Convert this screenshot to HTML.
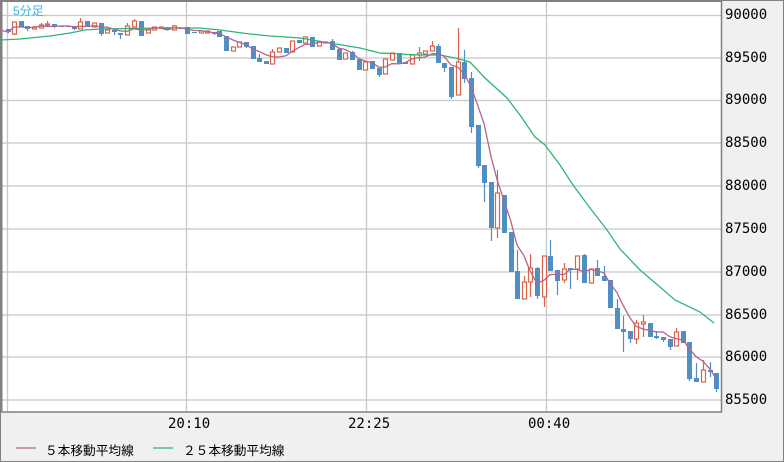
<!DOCTYPE html>
<html><head><meta charset="utf-8"><style>
html,body{margin:0;padding:0;}
body{width:784px;height:462px;background:#f0f0f0;position:relative;overflow:hidden;font-family:"Liberation Sans","Noto Sans CJK JP",sans-serif;}
#frame{position:absolute;left:0;top:0;width:782px;height:460px;border:1px solid #808080;}
svg{position:absolute;left:0;top:0;}
.lbl{position:absolute;font-family:"DejaVu Sans Mono","Liberation Mono",monospace;font-size:14px;color:#000;}
.leg{position:absolute;top:440px;font-size:12.7px;color:#000;font-family:"Liberation Sans","Noto Sans CJK JP",sans-serif;letter-spacing:0;}
</style></head><body>
<div id="frame"></div>
<svg id="s" width="784" height="462" xmlns="http://www.w3.org/2000/svg">
<rect x="1" y="1" width="720" height="411" fill="#fff"/>
<g stroke="#c8c8c8" stroke-width="1.3">
<line x1="1" y1="15.5" x2="721" y2="15.5"/><line x1="1" y1="58" x2="721" y2="58"/>
<line x1="1" y1="100.5" x2="721" y2="100.5"/><line x1="1" y1="143" x2="721" y2="143"/>
<line x1="1" y1="186" x2="721" y2="186"/><line x1="1" y1="229" x2="721" y2="229"/>
<line x1="1" y1="272" x2="721" y2="272"/><line x1="1" y1="315" x2="721" y2="315"/>
<line x1="1" y1="357" x2="721" y2="357"/><line x1="1" y1="400" x2="721" y2="400"/>
<line x1="7.5" y1="1" x2="7.5" y2="412"/><line x1="186.5" y1="1" x2="186.5" y2="412"/>
<line x1="366.5" y1="1" x2="366.5" y2="412"/><line x1="546.5" y1="1" x2="546.5" y2="412"/>
</g>
<line x1="1" y1="412" x2="722" y2="412" stroke="#808080" stroke-width="1.5"/>
<line x1="721.5" y1="1" x2="721.5" y2="412" stroke="#808080" stroke-width="1.5"/>
<line x1="1.5" y1="1" x2="1.5" y2="412" stroke="#808080" stroke-width="2"/>
<line x1="0" y1="1" x2="722" y2="1" stroke="#808080" stroke-width="2"/>
<g id="c"></g>
<polyline fill="none" stroke="#2fb573" stroke-width="1.3" points="0,40 20,39 50,36 70,33 85,30 100,29 160,28 200,28 220,30 250,34 270,36 300,38 330,43 360,48 380,53 400,54 420,55 440,55 455,58 470,62 485,78 507,98 520,115 535,137 545,145 560,165 573,185 590,208 607,230 620,249 640,270 660,287 675,300 700,312 714,323"/>
<polyline id="ma5" fill="none" stroke="#b5648c" stroke-width="1.3"/>
<line x1="16" y1="448" x2="36" y2="448" stroke="#b5648c" stroke-width="1.3"/>
<line x1="153" y1="448" x2="173" y2="448" stroke="#2fb573" stroke-width="1.3"/>
<text x="13" y="15" font-size="12" fill="#3ab4e8" font-family="Liberation Sans, Noto Sans CJK JP, sans-serif">5分足</text>
</svg>
<div class="lbl" style="left:725px;top:7px">90000</div>
<div class="lbl" style="left:725px;top:50px">89500</div>
<div class="lbl" style="left:725px;top:92px">89000</div>
<div class="lbl" style="left:725px;top:135px">88500</div>
<div class="lbl" style="left:725px;top:178px">88000</div>
<div class="lbl" style="left:725px;top:221px">87500</div>
<div class="lbl" style="left:725px;top:264px">87000</div>
<div class="lbl" style="left:725px;top:307px">86500</div>
<div class="lbl" style="left:725px;top:349px">86000</div>
<div class="lbl" style="left:725px;top:392px">85500</div>
<div class="lbl" style="left:168px;top:416px">20:10</div>
<div class="lbl" style="left:348px;top:416px">22:25</div>
<div class="lbl" style="left:528px;top:416px">00:40</div>
<div class="leg" style="left:45px">５本移動平均線</div>
<div class="leg" style="left:183px">２５本移動平均線</div>
<script>
var d=[
[8,'b',29,32,29,33],[14,'r',22,34,22,35],[21,'b',21,27,21,27],[27,'b',26,29,26,31],[34,'r',27,29,26,29],
[41,'r',25,28,23,28],[47,'r',24,25,21,26],[54,'b',24,27,24,28],[61,'b',26,27,26,27],[68,'b',26,27,26,27],
[74,'b',26,29,26,30],[80,'r',22,29,18,29],[87,'b',21,27,21,27],[94,'r',23,27,23,27],[101,'b',23,34,23,36],
[107,'r',30,33,30,33],[114,'b',30,32,30,35],[120,'b',33,35,33,39],[127,'r',26,35,23,35],[134,'r',21,27,19,27],
[141,'b',21,36,21,36],[148,'r',30,33,30,33],[154,'r',27,30,27,30],[161,'r',27,28,27,28],[167,'b',27,30,27,30],
[174,'r',26,30,25,30],[181,'b',28,29,28,29],[187,'b',27,34,27,34],[194,'b',32,33,32,33],[201,'r',31,33,31,33],
[207,'r',31,33,31,33],[214,'b',32,34,32,35],[219,'b',31,37,31,37],[226,'b',36,51,36,51],[233,'r',47,51,47,51],
[239,'r',42,47,42,47],[246,'b',42,47,42,48],[253,'b',46,59,46,59],[259,'b',58,62,54,62],[266,'b',61,64,61,64],
[272,'r',52,64,49,64],[279,'r',48,52,48,52],[286,'b',48,53,48,53],[292,'r',41,52,41,52],[299,'b',40,43,40,43],
[305,'r',37,43,37,43],[312,'b',37,47,37,47],[319,'r',42,46,42,46],[325,'r',42,43,42,43],[332,'b',41,50,39,50],
[339,'b',49,60,49,60],[345,'r',53,59,53,59],[352,'b',52,60,51,60],[359,'b',59,70,59,70],[365,'r',62,70,62,70],
[372,'b',61,69,61,69],[379,'b',68,75,68,77],[385,'r',59,74,59,74],[392,'r',53,60,53,60],[399,'b',53,63,53,63],
[405,'b',62,64,62,64],[412,'r',55,64,55,64],[419,'r',53,55,47,61],[425,'r',51,54,51,54],[432,'r',46,51,41,51],
[438,'b',46,63,44,63],[444,'b',63,68,63,72],[451,'b',67,97,67,99],[458,'r',62,95,28,95],[464,'b',62,79,50,83],
[471,'b',78,127,72,133],[478,'b',125,166,125,168],[484,'b',165,183,165,202],[491,'b',182,228,182,241],[497,'r',193,228,170,238],
[504,'b',195,233,195,233],[511,'b',232,272,232,272],[517,'b',271,299,250,299],[524,'r',282,299,276,299],[530,'r',268,282,254,297],
[537,'b',268,296,267,299],[544,'r',256,297,256,307],[550,'b',256,271,240,271],[557,'b',270,281,270,295],[564,'r',269,280,263,283],
[570,'b',268,270,268,289],[577,'r',256,269,256,280],[584,'b',255,283,254,283],[591,'r',269,283,269,283],[597,'b',268,276,260,276],
[604,'b',276,281,266,281],[610,'b',280,308,280,308],[617,'b',308,329,299,329],[623,'b',329,332,316,352],[630,'b',331,339,331,343],
[636,'r',323,339,320,344],[643,'r',322,324,315,337],[650,'b',323,337,323,337],[656,'b',336,338,331,339],[663,'b',337,340,337,342],
[670,'b',339,347,339,350],[676,'r',332,346,328,346],[683,'b',331,343,331,343],[689,'b',342,379,342,381],[696,'b',378,382,363,382],
[703,'r',370,382,360,382],[710,'b',370,372,362,377],[716,'b',373,389,373,392]];
var g=document.getElementById('c'),h='';
var closes=[];
d.forEach(function(c){
 var x=c[0],col=c[1]=='b'?'#4f8fc3':'#d9634a';
 h+='<line x1="'+(x+0.5)+'" y1="'+c[4]+'" x2="'+(x+0.5)+'" y2="'+c[5]+'" stroke="'+col+'" stroke-width="1.2"/>';
 var hh=Math.max(c[3]-c[2],1);
 if(c[1]=='b') h+='<rect x="'+(x-2)+'" y="'+c[2]+'" width="5" height="'+hh+'" fill="'+col+'"/>';
 else h+='<rect x="'+(x-1.5)+'" y="'+c[2]+'" width="4" height="'+hh+'" fill="#fff" stroke="'+col+'" stroke-width="1.2"/>';
 closes.push(c[1]=='b'?c[3]:c[2]);
});
g.innerHTML=h;
var pts=[];
for(var i=0;i<closes.length;i++){var s=0,n=0;for(var j=Math.max(0,i-4);j<=i;j++){s+=closes[j];n++;}pts.push(d[i][0]+','+(s/n).toFixed(1));}
document.getElementById('ma5').setAttribute('points','0,30 '+pts.join(' '));
</script>
</body></html>
